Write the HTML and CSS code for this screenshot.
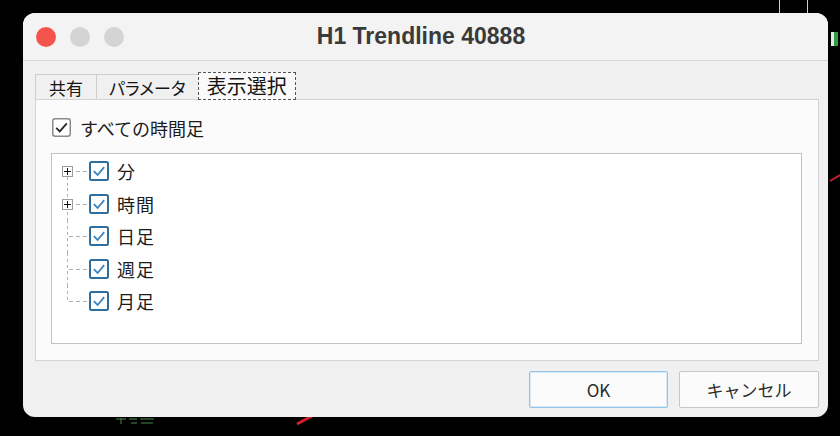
FILE: index.html
```html
<!DOCTYPE html>
<html lang="ja">
<head>
  <meta charset="UTF-8" />
  <title>H1 Trendline 40888</title>
  <link rel="stylesheet" href="styles.css">
</head>
<body>

  <!-- chart leftovers behind the dialog -->
  <svg class="chart" width="840" height="436" viewBox="0 0 840 436">
    <line x1="779.5" y1="0" x2="779.5" y2="13" stroke="#cfcfcf" stroke-width="1" />
    <line x1="807.5" y1="0" x2="807.5" y2="13" stroke="#cfcfcf" stroke-width="1" />
    <rect x="831" y="32" width="3" height="14" fill="#e6e6e6" />
    <rect x="834" y="32" width="4" height="14" fill="#2d9e45" />
    <line x1="830" y1="181" x2="840" y2="175" stroke="#c4202a" stroke-width="2" />
    <line x1="297" y1="424" x2="312" y2="416" stroke="#d4202a" stroke-width="3" />
    <path d="M116 419h10M121 418v6M129 419h8M131 423h6M140 419h14M141 423h12" stroke="#4a8a4a" stroke-width="1" fill="none" />
  </svg>

  <div class="window">
    <!-- title bar -->
    <div class="titlebar">
      <div class="lights">
        <span class="light red"></span>
        <span class="light"></span>
        <span class="light"></span>
      </div>
      <div class="title">H1 Trendline 40888</div>
      <div></div>
    </div>

    <!-- tabs -->
    <div class="tabs">
      <div class="tab">共有</div>
      <div class="tab">パラメータ</div>
      <div class="tab active">表示選択</div>
    </div>

    <div class="panel">
      <label class="check-all">
        <svg class="box" width="19" height="19" viewBox="0 0 19 19">
          <rect x="0.75" y="0.75" width="17.5" height="17.5" rx="2.5" fill="#fff" stroke="#8a8a8a" stroke-width="1.5" />
          <polyline points="4.2,9.8 7.8,13.4 14.8,5.4" fill="none" stroke="#262626" stroke-width="1.8" />
        </svg>
        すべての時間足
      </label>

      <div class="tree">
        <div class="node">
          <div class="branch"><span class="expander"></span></div>
          <svg class="tick" width="20" height="20" viewBox="0 0 20 20">
            <rect x="1" y="1" width="18" height="18" rx="1.5" fill="#fff" stroke="#2f6e9c" stroke-width="2" />
            <polyline points="4.8,10.2 8.6,14 15.2,6.2" fill="none" stroke="#3a84c0" stroke-width="1.8" />
          </svg>
          <span class="label">分</span>
        </div>
        <div class="node">
          <div class="branch"><span class="expander"></span></div>
          <svg class="tick" width="20" height="20" viewBox="0 0 20 20">
            <rect x="1" y="1" width="18" height="18" rx="1.5" fill="#fff" stroke="#2f6e9c" stroke-width="2" />
            <polyline points="4.8,10.2 8.6,14 15.2,6.2" fill="none" stroke="#3a84c0" stroke-width="1.8" />
          </svg>
          <span class="label">時間</span>
        </div>
        <div class="node">
          <div class="branch"></div>
          <svg class="tick" width="20" height="20" viewBox="0 0 20 20">
            <rect x="1" y="1" width="18" height="18" rx="1.5" fill="#fff" stroke="#2f6e9c" stroke-width="2" />
            <polyline points="4.8,10.2 8.6,14 15.2,6.2" fill="none" stroke="#3a84c0" stroke-width="1.8" />
          </svg>
          <span class="label">日足</span>
        </div>
        <div class="node">
          <div class="branch"></div>
          <svg class="tick" width="20" height="20" viewBox="0 0 20 20">
            <rect x="1" y="1" width="18" height="18" rx="1.5" fill="#fff" stroke="#2f6e9c" stroke-width="2" />
            <polyline points="4.8,10.2 8.6,14 15.2,6.2" fill="none" stroke="#3a84c0" stroke-width="1.8" />
          </svg>
          <span class="label">週足</span>
        </div>
        <div class="node">
          <div class="branch"></div>
          <svg class="tick" width="20" height="20" viewBox="0 0 20 20">
            <rect x="1" y="1" width="18" height="18" rx="1.5" fill="#fff" stroke="#2f6e9c" stroke-width="2" />
            <polyline points="4.8,10.2 8.6,14 15.2,6.2" fill="none" stroke="#3a84c0" stroke-width="1.8" />
          </svg>
          <span class="label">月足</span>
        </div>
      </div>
    </div>

    <!-- dialog buttons -->
    <div class="actions">
      <button class="btn default">OK</button>
      <button class="btn">キャンセル</button>
    </div>
  </div>

</body>
</html>
```

FILE: styles.css
```css
/* ----- Page ----- */
* {
  box-sizing: border-box;
}

html, body {
  margin: 0;
  width: 840px;
  height: 436px;
  overflow: hidden;
  background: #000;
}

body {
  position: relative;
  padding: 13px 0 0 23px;
  font-family: "Noto Sans CJK JP", "Noto Sans", sans-serif;
  color: #1c1c1c;
}

.chart {
  position: absolute;
  left: 0;
  top: 0;
}

/* ----- Window ----- */
.window {
  position: relative; /* sits above the chart */
  width: 805px;
  height: 404px;
  display: flex;
  flex-direction: column;
  border-radius: 12px;
  background: #f0f0f0;
  overflow: hidden;
}

.titlebar {
  height: 48px;
  display: grid;
  grid-template-columns: 1fr auto 1fr;
  align-items: center;
  border-bottom: 1px solid #d9d9d9;
  background: #f3f3f3;
}
.lights {
  display: flex;
  gap: 14px;
  padding-left: 13px;
}
.light {
  width: 20px;
  height: 20px;
  border-radius: 50%;
  background: #d4d4d4;
}
.light.red {
  background: #f5544c;
}
.title {
  padding-right: 9px;
  font-family: "Liberation Sans", Arial, sans-serif;
  font-weight: bold;
  font-size: 23px;
  color: #3a3a3a;
}

/* ----- Tabs ----- */
.tabs {
  height: 27px;
  margin: 11px 0 0 12px;
  display: flex;
  align-items: flex-end;
}
.tab {
  height: 25px;
  padding: 0 12px;
  display: flex;
  align-items: center;
  border: 1px solid #cdcdcd;
  border-bottom: none;
  font-size: 17px;
  line-height: 1;
  font-feature-settings: "palt";
  color: #141414;
}
.tab:first-child {
  padding: 0 13px;
}
.tab + .tab {
  margin-left: -1px;
}
.tab.active {
  position: relative;
  z-index: 1;
  height: 28px;
  margin-bottom: -1px;
  padding: 0 8px;
  border: 1px dashed #555;
  background: #fafafa;
  font-size: 20px;
}

/* ----- Panel ----- */
.panel {
  height: 262px;
  margin: 0 9px 0 12px;
  padding: 18px 16px 16px 15px;
  display: flex;
  flex-direction: column;
  border: 1px solid #d3d3d3;
  background: #fbfbfb;
}

.check-all {
  height: 19px;
  margin-left: 1px;
  display: flex;
  align-items: center;
  gap: 9px;
  font-size: 18px;
  line-height: 1;
}

.tree {
  flex: 1;
  margin-top: 16px;
  padding-top: 1px;
  border: 1px solid #c2c2c2;
  background: #fff;
}
.node {
  height: 32.5px;
  display: flex;
  align-items: center;
}
.branch {
  position: relative;
  width: 28px;
  height: 100%;
  margin-left: 9px;
}
/* dashed tree lines */
.branch::before {
  content: "";
  position: absolute;
  left: 6px;
  top: 0;
  bottom: 0;
  width: 1px;
  background: repeating-linear-gradient(to bottom, #b0b0b0 0 3px, transparent 3px 6px);
}
.branch::after {
  content: "";
  position: absolute;
  left: 7px;
  right: 2px;
  top: 50%;
  height: 1px;
  background: repeating-linear-gradient(to left, #b0b0b0 0 4px, transparent 4px 7px);
}
.node:first-child .branch::before {
  top: 50%;
}
.node:last-child .branch::before {
  bottom: 50%;
}
.expander {
  position: absolute;
  z-index: 1;
  left: 1px;
  top: 50%;
  width: 11px;
  height: 11px;
  margin-top: -5px;
  border: 1px solid #9c9c9c;
  background: #fff;
}
.expander::before,
.expander::after {
  content: "";
  position: absolute;
  background: #111;
}
.expander::before {
  left: 1px;
  right: 1px;
  top: 4px;
  height: 1px;
}
.expander::after {
  top: 1px;
  bottom: 1px;
  left: 4px;
  width: 1px;
}
.tick {
  flex: none;
}
.label {
  margin-left: 8px;
  font-size: 18px;
  line-height: 1;
  letter-spacing: 1px;
}

/* ----- Buttons ----- */
.actions {
  margin: 10px 9px 0 0;
  display: flex;
  justify-content: flex-end;
  gap: 11px;
}
.btn {
  width: 140px;
  height: 37px;
  border: 1px solid #c6c6c6;
  border-radius: 2px;
  background: #fbfbfb;
  font-family: "Noto Sans CJK JP", "Noto Sans", sans-serif;
  font-size: 17px;
  color: #2b2b2b;
}
.btn.default {
  width: 139px;
  border-color: #94c4e8;
  box-shadow: inset 0 0 0 1px #d6eaf8;
}
```
